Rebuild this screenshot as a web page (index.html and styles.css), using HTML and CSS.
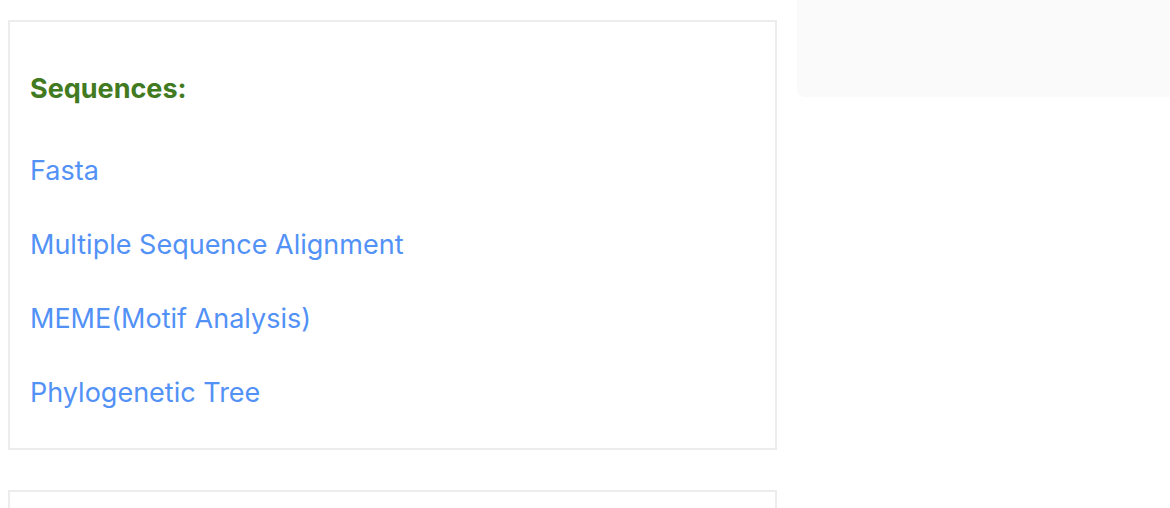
FILE: index.html
```html
<!DOCTYPE html>
<html>

<head>
    <title>Sequences</title>
    <meta name="viewport" content="width=device-width, initial-scale=1">
    <link rel="stylesheet" href="styles.css">
</head>

<body>
    <div class="page">
        <div class="main">
            <div class="card">
                <h3 class="card-title">Sequences:</h3>
                <div class="links">
                    <a href="#">Fasta</a>
                    <a href="#">Multiple Sequence Alignment</a>
                    <a href="#">MEME(Motif Analysis)</a>
                    <a href="#">Phylogenetic Tree</a>
                </div>
            </div>
            <div class="card card-next"></div>
        </div>
        <div class="side"></div>
    </div>
</body>

</html>
```
FILE: styles.css
```css
body {
    margin: 0;
    font-family: Inter, "Noto Sans", sans-serif;
    background: #fff;
}

.page {
    display: flex;
    gap: 20px;
    padding-left: 8px;
}

.main {
    width: 769px;
    flex-shrink: 0;
}

.card {
    margin-top: 20px;
    border: 2px solid #ececec;
    padding: 47px 20px 35px;
}

.card-next {
    margin-top: 40px;
    height: 60px;
}

.card-title {
    margin: 0 0 41.5px;
    font-size: 27px;
    line-height: 40px;
    font-weight: 700;
    color: #417a20;
}

.links {
    display: flex;
    flex-direction: column;
    align-items: flex-start;
    gap: 34.3px;
}

.links a {
    font-size: 27px;
    line-height: 40px;
    color: #5291f6;
    text-decoration: none;
}

.side {
    flex: 1;
    height: 97px;
    background: #fafafa;
    border-bottom-left-radius: 8px;
}
```
